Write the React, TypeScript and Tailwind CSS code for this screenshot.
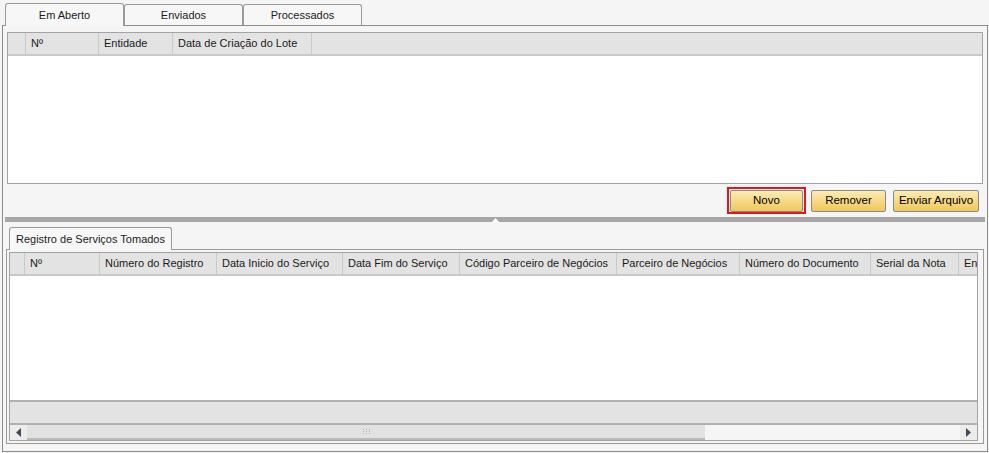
const topCols = [
  { label: 'Nº', w: 'w-[73px]' },
  { label: 'Entidade', w: 'w-[74px]' },
  { label: 'Data de Criação do Lote', w: 'w-[139px]' },
];

const bottomCols = [
  { label: 'Nº', w: 'w-[75px]' },
  { label: 'Número do Registro', w: 'w-[117px]' },
  { label: 'Data Inicio do Serviço', w: 'w-[126px]' },
  { label: 'Data Fim do Serviço', w: 'w-[117px]' },
  { label: 'Código Parceiro de Negócios', w: 'w-[157px]' },
  { label: 'Parceiro de Negócios', w: 'w-[123px]' },
  { label: 'Número do Documento', w: 'w-[131px]' },
  { label: 'Serial da Nota', w: 'w-[88px]' },
  { label: 'Entidade', w: 'w-[80px]' },
];

function HeaderCell({ label, w }: { label: string; w: string }) {
  return (
    <div className={`${w} shrink-0 overflow-hidden whitespace-nowrap border-r border-[#c9c9c9] pl-[5px] leading-[21px]`}>
      {label}
    </div>
  );
}

function Tab({ label, active, w }: { label: string; active?: boolean; w: string }) {
  return (
    <div
      className={`${w} flex items-center justify-center whitespace-nowrap rounded-t-[3px] border border-b-0 border-[#9b9b9b] bg-[#f7f7f7] ${
        active ? 'relative z-10 -mb-px h-[23px]' : 'h-[21px]'
      }`}
    >
      {label}
    </div>
  );
}

function YellowButton({ label, w }: { label: string; w: string }) {
  return (
    <button
      className={`${w} h-[22px] whitespace-nowrap rounded-[2px] border border-[#8a8a8a] bg-gradient-to-b from-[#fcebb0] to-[#f0c857] text-[11.5px] text-black`}
    >
      {label}
    </button>
  );
}

export default function App() {
  return (
    <div
      className="h-[453px] w-[989px] overflow-hidden bg-[#f5f5f5] text-[11px] text-[#1a1a1a]"
      style={{ fontFamily: '"Liberation Sans", Arial, sans-serif' }}
    >
      {/* top tabs */}
      <div className="flex h-[25px] items-end pl-[5px]">
        <Tab label="Em Aberto" active w="w-[119px]" />
        <Tab label="Enviados" w="w-[119px]" />
        <Tab label="Processados" w="w-[119px]" />
      </div>

      <div className="ml-[2px] flex h-[427px] w-[986px] flex-col border border-[#8c8c8c] bg-[#f5f5f5]">
        {/* lotes grid */}
        <div className="ml-[4px] mt-[6px] flex h-[152px] w-[976px] flex-col border border-[#a3a3a3] bg-white">
          <div className="flex h-[23px] shrink-0 border-b-2 border-[#c9c9c9] bg-[#e3e3e3]">
            <div className="w-[18px] shrink-0 border-r border-[#c9c9c9]" />
            {topCols.map((c) => (
              <HeaderCell key={c.label} {...c} />
            ))}
          </div>
        </div>

        {/* buttons */}
        <div className="mr-[8px] mt-[3px] flex items-center justify-end">
          <div className="h-[27px] w-[79px] border-2 border-[#e8141c] p-[1px]">
            <YellowButton label="Novo" w="w-full" />
          </div>
          <div className="ml-[5px]">
            <YellowButton label="Remover" w="w-[75px]" />
          </div>
          <div className="ml-[7px]">
            <YellowButton label="Enviar Arquivo" w="w-[86px]" />
          </div>
        </div>

        {/* splitter */}
        <div className="ml-[2px] mt-[3px] flex h-[5px] w-[980px] items-center justify-center bg-[#a7a7a7]">
          <svg width="7" height="4" viewBox="0 0 7 4">
            <path d="M3.5 0 L7 4 L0 4 Z" fill="#ffffff" />
          </svg>
        </div>

        {/* bottom tabs */}
        <div className="mt-[4px] flex h-[23px] items-end pl-[6px]">
          <Tab label="Registro de Serviços Tomados" active w="w-[163px]" />
        </div>

        <div className="ml-[3px] flex h-[195px] w-[978px] flex-col border border-[#9b9b9b] bg-[#f5f5f5]">
          <div className="ml-[2px] mt-[2px] flex h-[189px] w-[969px] flex-col border border-[#a3a3a3] bg-white">
            <div className="flex h-[23px] shrink-0 overflow-hidden border-b-2 border-[#c9c9c9] bg-[#e3e3e3]">
              <div className="w-[15px] shrink-0 border-r border-[#c9c9c9]" />
              {bottomCols.map((c) => (
                <HeaderCell key={c.label} {...c} />
              ))}
            </div>
            <div className="flex-1" />
            <div className="h-[23px] shrink-0 border-t-2 border-[#b0b0b0] bg-[#e3e3e3]" />
            {/* horizontal scrollbar */}
            <div className="flex h-[17px] shrink-0 border-t-2 border-[#b0b0b0] bg-[#f5f5f5]">
              <div className="flex w-[17px] items-center justify-center bg-[#ececec]">
                <svg width="5" height="9" viewBox="0 0 5 9">
                  <path d="M5 0 L0 4.5 L5 9 Z" fill="#3d4a57" />
                </svg>
              </div>
              <div className="flex w-[678px] items-center justify-center border-b-2 border-[#b9b9b9] bg-[#e2e2e2]">
                <svg width="7" height="5" viewBox="0 0 7 5">
                  <g fill="#a9b4bf">
                    <rect x="0" y="0" width="1" height="1" />
                    <rect x="3" y="0" width="1" height="1" />
                    <rect x="6" y="0" width="1" height="1" />
                    <rect x="0" y="2" width="1" height="1" />
                    <rect x="3" y="2" width="1" height="1" />
                    <rect x="6" y="2" width="1" height="1" />
                    <rect x="0" y="4" width="1" height="1" />
                    <rect x="3" y="4" width="1" height="1" />
                    <rect x="6" y="4" width="1" height="1" />
                  </g>
                </svg>
              </div>
              <div className="flex-1" />
              <div className="flex w-[17px] items-center justify-center bg-[#ececec]">
                <svg width="5" height="9" viewBox="0 0 5 9">
                  <path d="M0 0 L5 4.5 L0 9 Z" fill="#3d4a57" />
                </svg>
              </div>
            </div>
          </div>
        </div>
      </div>
    </div>
  );
}
